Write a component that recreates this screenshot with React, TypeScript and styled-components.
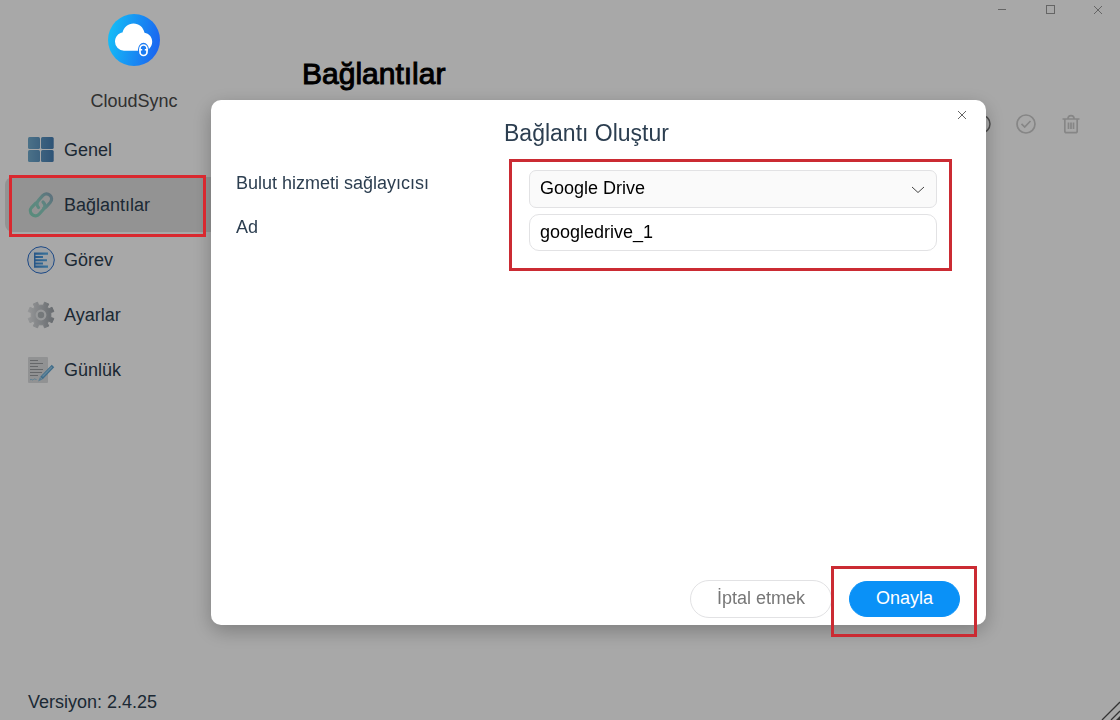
import React from "react";
import styled, { createGlobalStyle, css } from "styled-components";

const GlobalStyle = createGlobalStyle`
  *, *::before, *::after { box-sizing: border-box; }
  body {
    margin: 0;
    background: #fff;
    color: #2c3e50;
    font: 18px/24px "Liberation Sans", Arial, sans-serif;
  }
  button, input, select { font: inherit; }
`;

const Shell = styled.div`
  display: flex;
  min-height: 100vh;
`;

const Sidebar = styled.aside`
  display: flex;
  flex-direction: column;
  width: 268px;
  flex: none;
  padding: 14px 5px 6px;
`;

const Brand = styled.div`
  display: flex;
  flex-direction: column;
  align-items: center;
  gap: 23px;
  margin-bottom: 9px;
  color: #4a4a4a;

  svg {
    position: relative;
    z-index: 3;
  }
`;

const Nav = styled.nav`
  display: flex;
  flex-direction: column;
`;

const markFrame = css`
  content: "";
  position: absolute;
  border: 3px solid #d9282f;
  pointer-events: none;
`;

const NavLink = styled.a<{ $active?: boolean }>`
  position: relative;
  display: flex;
  align-items: center;
  gap: 9px;
  height: 55px;
  padding-left: 22px;
  border-radius: 8px;
  color: inherit;
  text-decoration: none;
  ${(p) =>
    p.$active &&
    css`
      background: #e0e0e0;
      &::after {
        ${markFrame}
        z-index: 3;
        inset: -2px 57px -5px 4px;
      }
    `}
`;

const Version = styled.div`
  margin-top: auto;
  padding-left: 23px;
`;

const Main = styled.main`
  flex: 1;
  min-width: 0;
`;

const WindowBar = styled.div`
  display: flex;
  justify-content: flex-end;
  gap: 24px;
  padding-right: 10px;
`;

const IconButton = styled.button<{ $color?: string }>`
  display: grid;
  place-items: center;
  width: 24px;
  height: 24px;
  padding: 0;
  border: 0;
  background: none;
  color: ${(p) => p.$color ?? "#999"};
`;

const WindowButton = styled(IconButton)`
  height: 19px;
`;

const PageTitle = styled.h1`
  margin: 37px 34px 0;
  font-size: 30px;
  line-height: 36px;
  font-weight: 400;
  color: #000;
  -webkit-text-stroke: 1px #000;
`;

const Toolbar = styled.div`
  display: flex;
  justify-content: flex-end;
  gap: 21px;
  padding: 20px 37px 0 0;
`;

const Overlay = styled.div`
  position: fixed;
  inset: 0;
  z-index: 1;
  display: flex;
  padding: 100px 134px 95px 211px;
  background: rgba(0, 0, 0, 0.34);
`;

const Dialog = styled.section`
  display: flex;
  flex-direction: column;
  flex: 1;
  border-radius: 10px;
  background: #fff;
  box-shadow: 0 6px 20px rgba(0, 0, 0, 0.26);
`;

const DialogHeader = styled.header`
  display: flex;
  align-items: flex-start;
  padding: 3px 12px 0;
`;

const DialogTitle = styled.h2`
  flex: 1;
  margin: 0;
  padding-top: 16px;
  font-size: 23px;
  line-height: 28px;
  font-weight: 400;
  text-align: center;
`;

const Form = styled.form`
  display: flex;
  flex-direction: column;
  flex: 1;
`;

const FormGrid = styled.div`
  display: grid;
  grid-template-columns: 293px 1fr;
  padding: 23px 49px 0 25px;
`;

const Stack = styled.div`
  display: flex;
  flex-direction: column;
  gap: 6px;
`;

const FieldStack = styled(Stack)`
  position: relative;
  &::after {
    ${markFrame}
    border-color: #cb2b33;
    inset: -11px -15px -19px -20px;
  }
`;

const Label = styled.label`
  height: 38px;
  line-height: 26px;
`;

const fieldBox = css`
  width: 100%;
  height: 38px;
  padding: 0 10px 2px;
  border: 1px solid #e2e2e4;
  color: #000;
  outline: none;
`;

const SelectBox = styled.div`
  display: grid;
  align-items: center;

  & > * { grid-area: 1 / 1; }
  svg {
    justify-self: end;
    margin: 2px 12px 0 0;
    pointer-events: none;
  }
`;

const Select = styled.select`
  ${fieldBox}
  appearance: none;
  border-radius: 7px;
  background: #fafafa;
`;

const TextInput = styled.input`
  ${fieldBox}
  height: 37px;
  padding-bottom: 1px;
  border-radius: 10px;
  background: #fff;
`;

const Actions = styled.footer`
  display: flex;
  justify-content: flex-end;
  align-items: center;
  gap: 17px;
  margin-top: auto;
  padding: 0 26px 7px;
`;

const Button = styled.button<{ $primary?: boolean }>`
  height: 38px;
  padding: 0 26px 2px;
  border: 1px solid #e2e2e4;
  border-radius: 19px;
  background: #fff;
  color: #777;
  ${(p) =>
    p.$primary &&
    css`
      height: 36px;
      border-color: #0a91f7;
      background: #0a91f7;
      color: #fff;
    `}
`;

const Marked = styled.div`
  position: relative;
  display: flex;
  &::after {
    ${markFrame}
    border-color: #cb2b33;
    inset: -15px -17px -20px -18px;
  }
`;

const Grip = styled.svg`
  position: fixed;
  right: 0;
  bottom: 0;
  z-index: 2;
`;

const Logo = () => (
  <svg width="52" height="52" viewBox="0 0 52 52" aria-hidden="true">
    <defs>
      <linearGradient id="logo" x1="0" y1=".4" x2="1" y2=".6">
        <stop offset="0" stopColor="#14bdf7" />
        <stop offset="1" stopColor="#1b64f0" />
      </linearGradient>
    </defs>
    <circle cx="26" cy="26" r="26" fill="url(#logo)" />
    <path
      d="M16 36.7a9 9 0 0 1-9-9c0-5 3.500-8.700 7.500-9.200C16 13 20 9.500 25.500 9.500s9.800 3.600 11 9.200c4.600.8 7.700 4.400 7.700 9 0 5-3.700 9-8.700 9z"
      fill="#fff"
    />
    <ellipse cx="35.500" cy="36" rx="5.600" ry="7.200" fill="#1b7cf2" />
    <rect x="32" y="31" width="7" height="10.500" rx="3.500" fill="none" stroke="#fff" strokeWidth="1.700" />
    <path d="M31 35.800h3.200M36.800 35.800H40" stroke="#fff" strokeWidth="1.400" />
  </svg>
);

const GeneralIcon = () => (
  <svg width="28" height="28" viewBox="0 0 28 28" aria-hidden="true">
    <defs>
      <linearGradient id="tiles" x1="0" y1="0" x2="28" y2="0" gradientUnits="userSpaceOnUse">
        <stop offset="0" stopColor="#74aed0" />
        <stop offset="1" stopColor="#447cb2" />
      </linearGradient>
    </defs>
    <g fill="url(#tiles)">
      <rect x="1" y="1" width="12" height="12" rx="1.500" />
      <rect x="14" y="1" width="12.700" height="12" rx="1.500" />
      <rect x="1" y="14" width="12" height="12" rx="1.500" />
      <rect x="14" y="14" width="12.700" height="12" rx="1.500" />
    </g>
  </svg>
);

const LinkIcon = () => (
  <svg width="28" height="28" viewBox="0 0 28 28" fill="none" aria-hidden="true">
    <defs>
      <linearGradient id="chain" x1="2" y1="24" x2="26" y2="4" gradientUnits="userSpaceOnUse">
        <stop offset="0" stopColor="#86d4bb" />
        <stop offset=".5" stopColor="#8fd0c4" />
        <stop offset="1" stopColor="#8ca9bd" />
      </linearGradient>
    </defs>
    <g stroke="url(#chain)" strokeWidth="3.200" strokeLinecap="round">
      <path d="M11.500 16.500c-2-2.300-2-5 0-7.200l4.200-4.600c2-2.200 5-2.300 7.200-.4s2.300 5 .3 7.200l-4 4.300c-.8.8-1.500 1.200-2.500 1.500" />
      <path d="M16 11c2.200 2.200 2.400 5 .5 7.200l-4.200 4.800c-2 2.200-5 2.400-7.200.5s-2.300-5-.4-7.200L8.500 12.300" />
    </g>
  </svg>
);

const TaskIcon = () => (
  <svg width="28" height="28" viewBox="0 0 28 28" aria-hidden="true">
    <defs>
      <linearGradient id="task" x1="6" y1="0" x2="23" y2="0" gradientUnits="userSpaceOnUse">
        <stop offset="0" stopColor="#3a80cc" />
        <stop offset="1" stopColor="#5cb6f0" />
      </linearGradient>
    </defs>
    <circle cx="14" cy="14" r="13.300" fill="#eef4fa" stroke="#2b6ecb" />
    <path
      d="M7 6.500h14v2.200H7zM7 10h9v2H7zM7 13.200h13v2H7zM7 16.500h9v2H7zM7 19.500h14v2.200H7zM7 6.500h1.500v15H7z"
      fill="url(#task)"
    />
  </svg>
);

const GearIcon = () => (
  <svg width="28" height="28" viewBox="0 0 28 28" aria-hidden="true">
    <defs>
      <linearGradient id="gear" x1="1" y1="0" x2="27" y2="0" gradientUnits="userSpaceOnUse">
        <stop offset="0" stopColor="#e2e4e6" />
        <stop offset="1" stopColor="#9ca2a8" />
      </linearGradient>
    </defs>
    <path
      d="M11.500 4.200 10.600 1.200 6.200 3 7.700 6 6 7.700 3 6.200 1.200 10.600 4.200 11.500v5L1.200 17.400 3 21.800 6 20.300 7.700 22 6.200 25l4.400 1.800.9-3h5l.9 3L21.800 25 20.300 22 22 20.300l3 1.500 1.800-4.400-3-.9v-5l3-.9L25 6.200 22 7.700 20.300 6 21.800 3 17.400 1.200l-.9 3z"
      fill="url(#gear)"
      stroke="url(#gear)"
      strokeLinejoin="round"
    />
    <circle cx="14" cy="14" r="4.300" fill="#b1b6ba" stroke="#e6e8ea" strokeWidth="2.200" />
  </svg>
);

const LogIcon = () => (
  <svg width="28" height="28" viewBox="0 0 28 28" aria-hidden="true">
    <rect x="1" y="1" width="20" height="26" rx="1" fill="#dcdee0" />
    <path
      d="M3 4.500h8M3 7.500h13M3 10.500h8M3 13.500h13M3 16.500h12M3 19.500h8"
      stroke="#9a9da0"
      strokeWidth="1.200"
    />
    <path d="M3 24c1.500-2 2 1 3.500-.5s2 .5 3 0" fill="none" stroke="#8cc0dc" />
    <path d="M26 10 14.500 22" stroke="#62a6d2" strokeWidth="3.400" />
    <path d="m13 21-2 4.500 4.500-2z" fill="#86bddd" />
    <path d="M24.800 11 15.500 20.500" stroke="#98cdec" strokeWidth="1.300" />
  </svg>
);

const CrossIcon = () => (
  <svg width="10" height="10" viewBox="0 0 10 10" stroke="currentColor" aria-hidden="true">
    <path d="m1 1 8 8M9 1 1 9" />
  </svg>
);

const navItems = [
  { label: "Genel", icon: <GeneralIcon /> },
  { label: "Bağlantılar", icon: <LinkIcon />, active: true },
  { label: "Görev", icon: <TaskIcon /> },
  { label: "Ayarlar", icon: <GearIcon /> },
  { label: "Günlük", icon: <LogIcon /> },
];

export default function App() {
  return (
    <>
      <GlobalStyle />
      <Shell>
        <Sidebar>
          <Brand>
            <Logo />
            <span>CloudSync</span>
          </Brand>
          <Nav>
            {navItems.map((item) => (
              <NavLink key={item.label} href="#" $active={item.active}>
                {item.icon}
                {item.label}
              </NavLink>
            ))}
          </Nav>
          <Version>Versiyon: 2.4.25</Version>
        </Sidebar>
        <Main>
          <WindowBar>
            <WindowButton aria-label="Minimize">
              <svg width="10" height="10" stroke="currentColor" aria-hidden="true">
                <path d="M1 4.500h8" />
              </svg>
            </WindowButton>
            <WindowButton aria-label="Maximize">
              <svg width="10" height="10" fill="none" stroke="currentColor" aria-hidden="true">
                <rect x="1.500" y="0.500" width="8" height="8" />
              </svg>
            </WindowButton>
            <WindowButton aria-label="Close window">
              <CrossIcon />
            </WindowButton>
          </WindowBar>
          <PageTitle>Bağlantılar</PageTitle>
          <Toolbar>
            <IconButton aria-label="Add" $color="#777">
              <svg width="20" height="20" fill="none" stroke="currentColor" strokeWidth="1.500" aria-hidden="true">
                <circle cx="10" cy="10" r="9" />
                <path d="M10 5v10M5 10h10" />
              </svg>
            </IconButton>
            <IconButton aria-label="Verify" $color="#cbcbcb">
              <svg width="20" height="20" fill="none" stroke="currentColor" strokeWidth="1.700" aria-hidden="true">
                <circle cx="10" cy="10" r="9" />
                <path d="m5.500 9.800 3.200 3.200 5.800-6" />
              </svg>
            </IconButton>
            <IconButton aria-label="Delete" $color="#cbcbcb">
              <svg width="20" height="20" fill="none" stroke="currentColor" strokeWidth="1.700" aria-hidden="true">
                <path d="M1.500 5h17M3.800 5v12q0 1.700 1.700 1.700h9q1.700 0 1.700-1.700V5M7 4.500Q7 1.700 10 1.700t3 2.800M7.500 8.500V15M10 8.500V15M12.500 8.500V15" />
              </svg>
            </IconButton>
          </Toolbar>
        </Main>
      </Shell>
      <Overlay>
        <Dialog role="dialog" aria-modal="true" aria-labelledby="dialog-title">
          <DialogHeader>
            <DialogTitle id="dialog-title">Bağlantı Oluştur</DialogTitle>
            <IconButton aria-label="Close" $color="#666">
              <CrossIcon />
            </IconButton>
          </DialogHeader>
          <Form onSubmit={(e: React.FormEvent) => e.preventDefault()}>
            <FormGrid>
              <Stack>
                <Label htmlFor="provider">Bulut hizmeti sağlayıcısı</Label>
                <Label htmlFor="name">Ad</Label>
              </Stack>
              <FieldStack>
                <SelectBox>
                  <Select id="provider">
                    <option>Google Drive</option>
                  </Select>
                  <svg width="14" height="8" fill="none" stroke="#444" aria-hidden="true">
                    <path d="m1 1 6 5.500L13 1" />
                  </svg>
                </SelectBox>
                <TextInput id="name" defaultValue="googledrive_1" />
              </FieldStack>
            </FormGrid>
            <Actions>
              <Button type="button">İptal etmek</Button>
              <Marked>
                <Button type="submit" $primary>
                  Onayla
                </Button>
              </Marked>
            </Actions>
          </Form>
        </Dialog>
      </Overlay>
      <Grip width="20" height="20" stroke="#333" strokeWidth="1.300" aria-hidden="true">
        <path d="M2 20 20 2M11 20l9-9" />
        <path d="m16 20 4-4v4z" fill="#333" stroke="none" />
      </Grip>
    </>
  );
}
